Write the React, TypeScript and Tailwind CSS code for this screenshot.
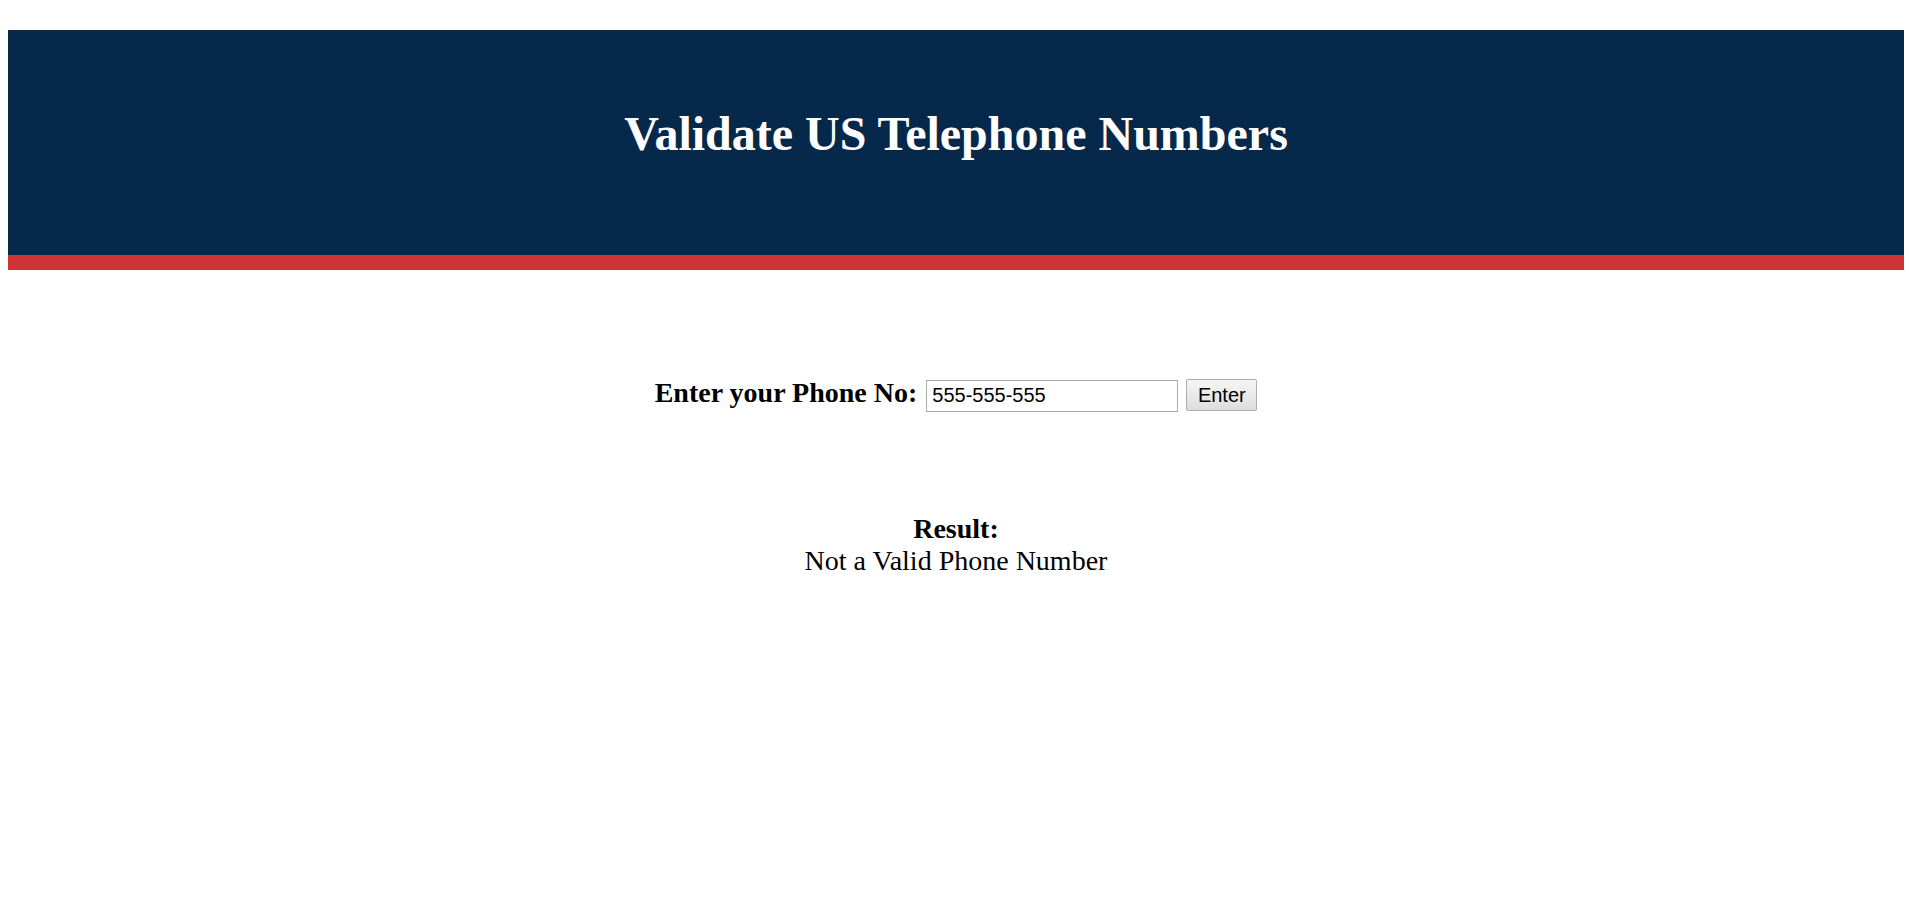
import { useState } from "react";

function App() {
  const [phone, setPhone] = useState("555-555-555");
  const [result, setResult] = useState("Not a Valid Phone Number");

  function validar() {
    const re = /^(1\s?)?(\(\d{3}\)|\d{3})[\s-]?\d{3}[\s-]?\d{4}$/;
    setResult(re.test(phone) ? "Valid Phone Number" : "Not a Valid Phone Number");
  }

  return (
    <div className="min-h-[913px] bg-white pt-[30px] font-['Liberation_Serif','Times_New_Roman',serif] text-black">
      <header className="ml-2 mr-[5px] bg-[#06284b] border-b-[15px] border-[#cf3535] pt-[76px] pb-[94px]">
        <h1 className="text-center text-[48px] leading-[1.15] font-bold text-white">
          Validate US Telephone Numbers
        </h1>
      </header>

      <div className="ml-2 mr-[5px] mt-[107px] flex justify-center items-baseline">
        <label className="text-[28px] leading-[1.15] font-bold mr-[9px]">Enter your Phone No:</label>
        <input
          type="text"
          value={phone}
          onChange={(e) => setPhone(e.target.value)}
          className="w-[252px] h-[32px] border border-[#a9a9a9] px-[5px] text-[20px] font-['Liberation_Sans',Arial,sans-serif] outline-none"
        />
        <button
          onClick={validar}
          className="ml-2 w-[71px] h-[32px] border border-[#adadad] bg-gradient-to-b from-[#f6f6f6] to-[#dddddd] text-[20px] font-['Liberation_Sans',Arial,sans-serif] rounded-[2px]"
        >
          Enter
        </button>
      </div>

      <div className="ml-2 mr-[5px] mt-[101px] text-center text-[28px] leading-[1.15]">
        <div className="font-bold">Result:</div>
        <div>{result}</div>
      </div>
    </div>
  );
}

export default App;
